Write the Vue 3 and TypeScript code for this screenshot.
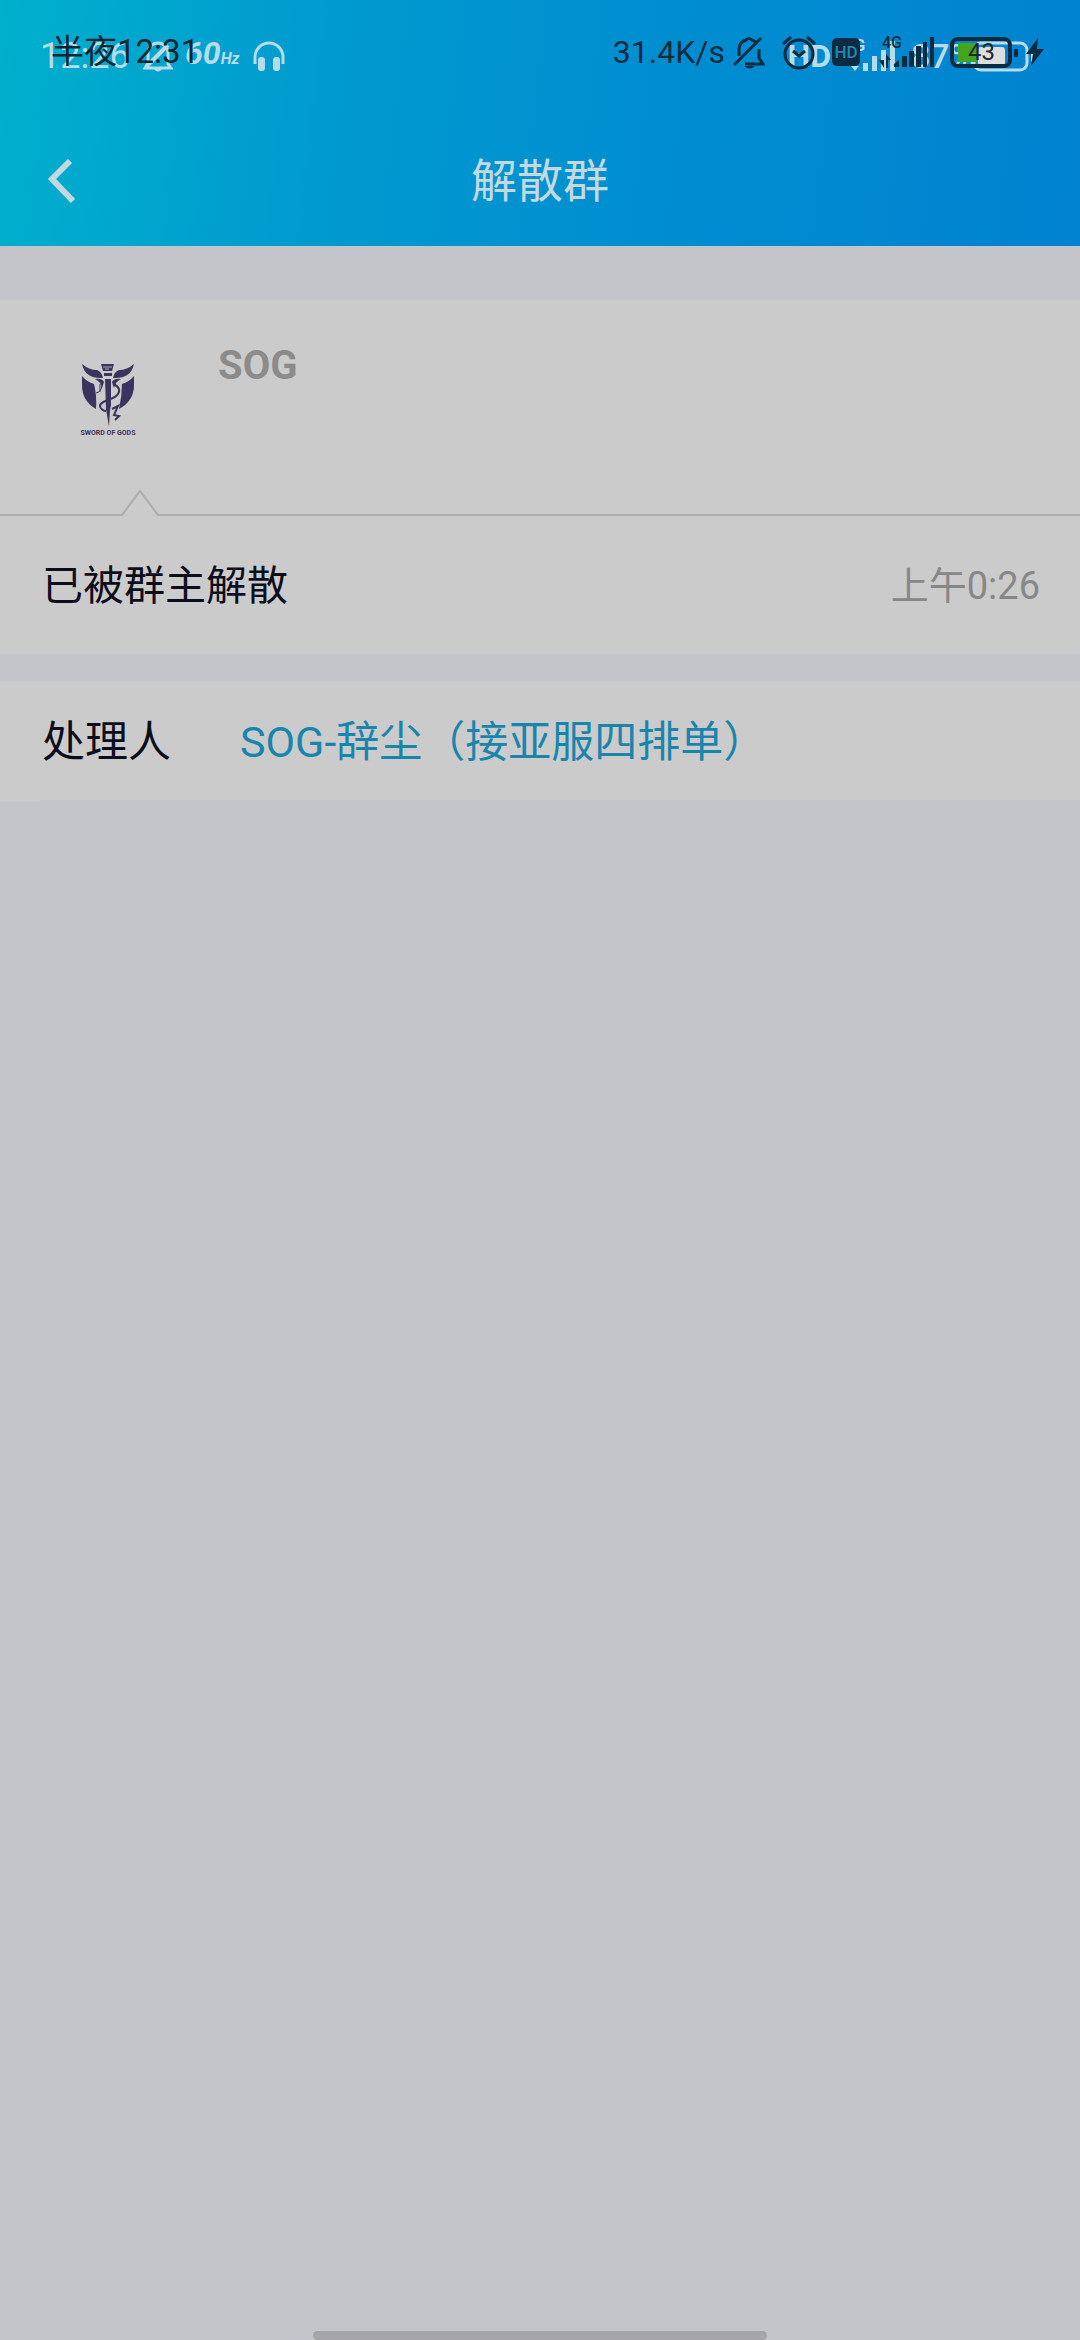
<script setup lang="ts">
interface SystemStatus {
  time: string
  battery: string
}

const appStatus: SystemStatus = { time: '12:26', battery: '87%' }
const deviceStatus: SystemStatus = { time: '半夜12:31', battery: '43' }
const networkSpeed = '31.4K/s'

const group = { name: 'SOG', motto: 'SWORD OF GODS' }
const notice = { text: '已被群主解散', time: '上午0:26' }
const handler = { label: '处理人', name: 'SOG-辞尘（接亚服四排单）' }
</script>

<template>
  <div class="page">
    <header class="header">
      <div class="status">
        <div class="status-row light">
          <span class="light-time">{{ appStatus.time }}</span>
          <svg class="light-bell" width="30" height="32" viewBox="0 0 30 32">
            <path d="M5 24V13a10 10 0 0 1 20 0v11l3 4H2z" fill="none" stroke="currentColor" stroke-width="3" />
            <path d="M3 27 25 5" stroke="currentColor" stroke-width="4" />
            <path d="M10 28h10q-5 7-10 0z" fill="currentColor" />
          </svg>
          <span class="rate">60<small>Hz</small></span>
          <svg class="phones" width="32" height="31" viewBox="0 0 32 31">
            <path d="M2 23V16a14 14 0 0 1 28 0v7" fill="none" stroke="currentColor" stroke-width="3" />
            <rect x="5" y="16" width="7" height="14" rx="3" fill="currentColor" />
            <rect x="20" y="16" width="7" height="14" rx="3" fill="currentColor" />
          </svg>
          <span class="spacer"></span>
          <span class="light-hd">HD</span>
          <span class="light-4g">4G</span>
          <svg class="light-bars" width="44" height="30" viewBox="0 0 44 30">
            <path d="M0 25h8l-4 5z" fill="currentColor" />
            <path d="M12 22h5v8h-5zM21 15h5v15h-5zM30 9h5v21h-5zM39 0h5v30h-5z" fill="currentColor" />
          </svg>
          <span class="light-level">{{ appStatus.battery }}</span>
          <svg class="light-battery" width="64" height="31" viewBox="0 0 64 31">
            <rect x="2" y="2" width="53" height="27" rx="7" fill="none" stroke="currentColor" stroke-width="3" />
            <rect x="6" y="6" width="27" height="19" rx="3" fill="#dedede" />
            <path d="M59 11q5 5 0 10z" fill="currentColor" />
          </svg>
        </div>

        <div class="status-row dark">
          <span class="dark-time">{{ deviceStatus.time }}</span>
          <span class="spacer"></span>
          <span class="speed">{{ networkSpeed }}</span>
          <svg class="dark-bell" width="32" height="33" viewBox="0 0 32 33">
            <path d="M6 20v-6q0-8 7-10 3-3 6 0 3 1 5 3M26 13v9l4 6H12" fill="none" stroke="currentColor" stroke-width="3" />
            <path d="M1 29 28 2" stroke="currentColor" stroke-width="3" />
            <path d="M11 30h11q-5 5-11 0z" fill="currentColor" />
          </svg>
          <svg class="alarm" width="36" height="35" viewBox="0 0 36 35">
            <circle cx="18" cy="19" r="14" fill="none" stroke="currentColor" stroke-width="3" />
            <path d="M2 9 10 2M26 2l8 7M12 16l6 5 6-5" fill="none" stroke="currentColor" stroke-width="3" />
          </svg>
          <span class="dark-hd">HD</span>
          <svg class="dark-signal" width="56" height="32" viewBox="0 0 56 32">
            <text class="dark-4g" x="3" y="12">4G</text>
            <path d="M0 24h5v8zM7 18l5 6H9v8H7z" fill="currentColor" />
            <path d="M15 31v-3l5-4v7zM23 20h5v11h-5zM30 15h5v16h-5zM37 10h5v21h-5zM44 6h4v25h-4zM51 1h4v30h-4z" fill="currentColor" />
          </svg>
          <span class="dark-battery">
            <svg width="68" height="31" viewBox="0 0 68 31">
              <rect x="8" y="6" width="19" height="19" fill="#42a51b" />
              <rect x="2" y="2" width="58" height="27" rx="6" fill="none" stroke="currentColor" stroke-width="4" />
              <rect x="64" y="12" width="4" height="8" rx="1" fill="currentColor" />
            </svg>
            <span class="dark-level">{{ deviceStatus.battery }}</span>
          </span>
          <svg class="bolt" width="18" height="28" viewBox="0 0 18 28">
            <path d="M12 0 0 16h7L5 28l13-17h-7z" fill="currentColor" />
          </svg>
        </div>
      </div>

      <nav class="nav">
        <button class="back" type="button" aria-label="返回">
          <svg width="28" height="46" viewBox="0 0 28 46">
            <path d="M22 3 4 21l21 22" fill="none" stroke="currentColor" stroke-width="6" />
          </svg>
        </button>
        <h1 class="title">{{ '解散群' }}</h1>
      </nav>
    </header>

    <main>
      <section class="card">
        <div class="group">
          <div class="avatar">
            <svg width="54" height="64" viewBox="0 0 54 64">
              <g fill="#3a345e">
                <path d="M1 13q5 6 12 8 3 12 2 25Q1 38 1 22z" />
                <path d="M53 13q-5 6-12 8 0 12-3 25 15-8 15-24z" />
                <path d="M1 1q7 6 15 6 5 2 6 8Q4 16 1 1z" />
                <path d="M53 1q-7 6-15 6-5 2-6 8Q50 16 53 1z" />
                <path d="M20 1h13l-2 7h-9zM23 10h8v3h-8zM24 16h6v26l-1 5-1 17-3-18z" />
                <path d="M14 16q7-1 9 3l-2 6q-1-6-7-9zM40 16q-7-1-9 3l2 6q1-6 7-9z" />
              </g>
              <path d="M19 21v8M15 30q5-1 6-7" fill="none" stroke="#3a345e" stroke-width="1" />
              <path d="M32 21q9 4 5 10c-3 6-18 6-18 12 0 3 4 5 6 5M31 46l6-3-4 9 5 1-4 4" fill="none" stroke="#3a345e" stroke-width="2" />
              <path d="M22 4h9M24 6h4" stroke="#aaa9b4" stroke-width="1" />
            </svg>
            <span class="motto">{{ group.motto }}</span>
          </div>
          <h2 class="group-name">{{ group.name }}</h2>
        </div>
        <div class="divider">
          <i class="rule lead"></i>
          <svg width="38" height="27" viewBox="0 0 38 27">
            <path d="M0 26h1L19 2l18 24h1" fill="none" stroke="#acacac" stroke-width="2" />
          </svg>
          <i class="rule rest"></i>
        </div>
        <div class="notice">
          <span>{{ notice.text }}</span>
          <time class="notice-time">{{ notice.time }}</time>
        </div>
      </section>

      <section class="card handler">
        <span class="label">{{ handler.label }}</span>
        <a class="person" href="#">{{ handler.name }}</a>
      </section>
    </main>

    <div class="home-bar"></div>
  </div>
</template>

<style>
body {
  margin: 0;
  background: #c4c5ca;
}
</style>

<style scoped>
.page {
  display: flex;
  flex-direction: column;
  min-height: 100vh;
  background: #c4c5ca;
  font-family: Roboto, "Noto Sans CJK SC", sans-serif;
}

svg {
  display: block;
  flex: none;
}

.header {
  background: linear-gradient(97deg, #00b0cc 0%, #009acf 30%, #008ed0 60%, #0082d0 100%);
}

.status {
  display: grid;
  height: 116px;
}

.status-row {
  grid-area: 1 / 1;
  display: flex;
  align-items: center;
  height: 40px;
  line-height: 40px;
  white-space: nowrap;
}

.spacer {
  flex: 1;
}

.light {
  margin-top: 36px;
  padding: 0 44px 0 40px;
  color: #b5dce8;
}

.light-time {
  width: 103px;
  font-size: 36px;
}

.rate {
  margin-left: 12px;
  font-size: 32px;
  font-style: italic;
  font-weight: 700;
}

.rate small {
  font-size: 16px;
}

.phones {
  margin-left: 14px;
}

.light-hd {
  font-size: 32px;
  font-weight: 700;
}

.light-4g {
  align-self: flex-start;
  width: 24px;
  margin-left: 14px;
  font-size: 16px;
  font-weight: 700;
  line-height: 20px;
}

.light-bars {
  margin-left: -18px;
}

.light-level {
  width: 63px;
  margin-left: 16px;
  font-size: 34px;
  font-weight: 500;
}

.light-battery {
  margin-left: -2px;
}

.dark {
  margin-top: 32px;
  padding: 0 36px 0 51px;
  color: #0b2c40;
}

.dark-time {
  color: #082631;
  font-size: 33px;
}

.speed {
  font-size: 32px;
}

.dark-bell {
  margin-left: 8px;
}

.alarm {
  margin-left: 16px;
}

.dark-hd {
  width: 28px;
  height: 28px;
  margin-left: 15px;
  border-radius: 5px;
  background: #0b2c40;
  color: #2586b3;
  font-size: 17px;
  font-weight: 500;
  line-height: 28px;
  text-align: center;
}

.dark-signal {
  margin-left: 19px;
}

.dark-4g {
  fill: #0b2c40;
  font-size: 16px;
  font-weight: 500;
}

.dark-battery {
  display: grid;
  align-items: center;
  margin-left: 15px;
}

.dark-battery > * {
  grid-area: 1 / 1;
}

.dark-level {
  padding-left: 18px;
  color: #20272a;
  font-size: 24px;
  line-height: 31px;
}

.bolt {
  margin-left: 8px;
}

.nav {
  display: grid;
  grid-template-columns: 120px 1fr 120px;
  align-items: center;
  height: 130px;
  color: #c3d8df;
}

.back {
  display: flex;
  align-items: center;
  height: 130px;
  padding: 0 0 0 48px;
  border: 0;
  background: none;
  color: inherit;
}

.title {
  margin: 0;
  font-size: 46px;
  font-weight: 400;
  line-height: 68px;
  text-align: center;
}

main {
  padding-top: 54px;
}

.card {
  background: #cbcbcb;
}

.group {
  display: flex;
  gap: 50px;
  height: 189px;
  padding-left: 48px;
}

.avatar {
  display: flex;
  flex-direction: column;
  align-items: center;
  width: 120px;
  padding-top: 63px;
}

.motto {
  color: #3a345e;
  font-size: 7px;
  font-weight: 700;
  line-height: 12px;
  white-space: nowrap;
}

.group-name {
  margin: 0;
  padding-top: 42px;
  color: #8b8b8b;
  font-size: 40px;
  font-weight: 700;
  line-height: 48px;
}

.divider {
  display: flex;
  align-items: flex-end;
}

.rule {
  height: 2px;
  background: #acacac;
}

.lead {
  width: 121px;
}

.rest {
  flex: 1;
}

.notice {
  display: flex;
  align-items: center;
  justify-content: space-between;
  box-sizing: border-box;
  height: 138px;
  padding: 0 40px 6px 42px;
  color: #0c0d1a;
  font-size: 41px;
}

.notice-time {
  color: #878787;
  font-size: 38px;
}

.handler {
  display: flex;
  align-items: center;
  box-sizing: border-box;
  height: 120px;
  margin-top: 27px;
  padding-bottom: 6px;
  background: linear-gradient(#c4c5ca, #c4c5ca) 40px 100% / 100% 1px no-repeat #cbcbcb;
  font-size: 43px;
}

.label {
  width: 198px;
  padding-left: 42px;
  color: #0c0d1a;
}

.person {
  color: #1985ad;
  text-decoration: none;
}

.home-bar {
  width: 42%;
  height: 9px;
  margin: auto auto 0;
  border-radius: 5px;
  background: #a6a6aa;
}
</style>
